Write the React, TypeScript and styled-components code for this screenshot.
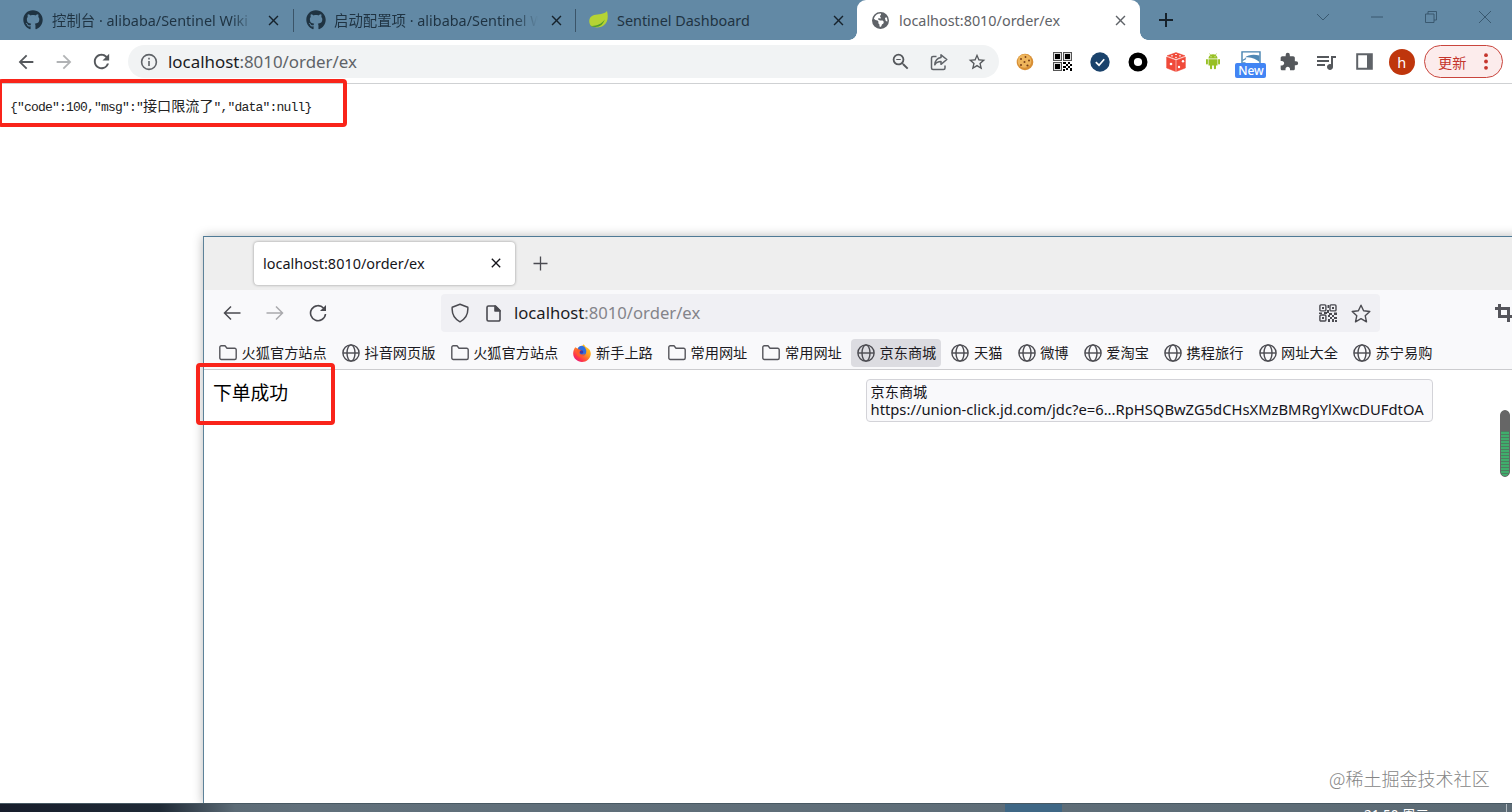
import React from "react";
import styled, { createGlobalStyle } from "styled-components";
import { FaGithub, FaEarthAmericas } from "react-icons/fa6";
import { MdExtension, MdQueueMusic, MdArrowBack, MdArrowForward, MdRefresh, MdOutlineZoomOut, MdStarBorder, MdAdd, MdClose } from "react-icons/md";

const latin = `"Noto Sans", "Noto Sans CJK SC", sans-serif`;

const GlobalStyle = createGlobalStyle`
  * { box-sizing: border-box; }
  body { margin: 0; background: #fff; overflow: hidden; font-family: ${latin}; }
  svg { display: block; flex: none; }
`;

const Desktop = styled.div`
  position: relative;
  width: 1512px;
  height: 812px;
  overflow: hidden;
  display: flex;
  flex-direction: column;
  background: #fff;
`;

/* ---------- back browser ---------- */

const TabStrip = styled.div`
  height: 40px;
  flex: none;
  display: flex;
  background: #6289a5;
`;

const StripTab = styled.div<{ $width: number; $divider?: boolean; $end?: number }>`
  width: ${(p) => p.$width}px;
  height: 40px;
  display: flex;
  align-items: center;
  padding: 0 ${(p) => p.$end ?? 12}px 0 12px;
  color: #1f3342;
  position: relative;
  &::after {
    content: "";
    display: ${(p) => (p.$divider ? "block" : "none")};
    position: absolute;
    right: 0;
    top: 9px;
    width: 1px;
    height: 23px;
    background: #3b5468;
  }
`;

const ActiveTab = styled(StripTab)`
  background: #fff;
  border-radius: 9px 9px 0 0;
  padding: 0 11px 0 15px;
  color: #5f6368;
  &::before,
  &::after {
    content: "";
    display: block;
    position: absolute;
    top: auto;
    bottom: 0;
    width: 8px;
    height: 8px;
  }
  &::before {
    left: -8px;
    background: radial-gradient(circle at 0 0, transparent 7.5px, #fff 8px);
  }
  &::after {
    right: -8px;
    background: radial-gradient(circle at 100% 0, transparent 7.5px, #fff 8px);
  }
`;

const TabTitle = styled.div<{ $fade?: boolean; $gap?: number }>`
  flex: 1;
  margin-left: ${(p) => p.$gap ?? 9}px;
  margin-right: 8px;
  font-size: 14.4px;
  line-height: 41px;
  height: 40px;
  white-space: nowrap;
  overflow: hidden;
  ${(p) => p.$fade && "mask-image: linear-gradient(90deg, #000 calc(100% - 26px), transparent calc(100% - 2px));"}
`;

const NewTab = styled.div`
  width: 52px;
  display: flex;
  align-items: center;
  justify-content: center;
  color: #16222c;
`;

const WindowButtons = styled.div`
  margin-left: auto;
  display: flex;
  height: 34px;
  align-items: center;
  color: #36536a;
`;

const WindowButton = styled.div`
  width: 54px;
  display: flex;
  justify-content: center;
`;

const Toolbar = styled.div`
  height: 44px;
  flex: none;
  display: flex;
  align-items: center;
  border-bottom: 1px solid #cfd1d3;
  background: #fff;
  color: #55585c;
`;

const NavButtons = styled.div`
  width: 128px;
  padding-left: 7px;
  display: flex;
`;

const NavButton = styled.div<{ $dim?: boolean; $width?: number }>`
  width: ${(p) => p.$width ?? 38}px;
  display: flex;
  justify-content: center;
  align-items: center;
  opacity: ${(p) => (p.$dim ? 0.45 : 1)};
`;

const Omnibox = styled.div`
  width: 871px;
  height: 33px;
  border-radius: 17px;
  background: #f1f3f4;
  display: flex;
  align-items: center;
  padding: 0 3px 0 12px;
`;

const Url = styled.div<{ $size: number; $gap: number; $tone: string }>`
  flex: 1;
  margin-left: ${(p) => p.$gap}px;
  font-size: ${(p) => p.$size}px;
  line-height: 32px;
  white-space: nowrap;
  color: ${(p) => p.$tone};
`;

const Host = styled.span`
  color: #1b1c1f;
`;

const Slot = styled.div<{ $width?: number }>`
  width: ${(p) => p.$width ?? 37.7}px;
  display: flex;
  justify-content: center;
  align-items: center;
`;

const Extensions = styled.div`
  display: flex;
  align-items: center;
  margin-left: 7px;
  width: 418px;
`;

const NewBadgeStack = styled.div`
  display: flex;
  flex-direction: column;
  align-items: center;
  height: 28px;
  margin-top: 6px;
`;

const NewBadge = styled.div`
  width: 31px;
  height: 15px;
  border-radius: 2px;
  background: #4285f4;
  color: #fff;
  font-size: 12px;
  font-weight: 500;
  line-height: 15px;
  text-align: center;
`;

const Avatar = styled.div`
  width: 26px;
  height: 26px;
  border-radius: 50%;
  background: #bf360c;
  color: #fff;
  font-size: 14.5px;
  line-height: 26px;
  text-align: center;
`;

const UpdatePill = styled.div`
  width: 79px;
  height: 33px;
  border: 1.5px solid #c9453d;
  border-radius: 17px;
  background: #fcecec;
  color: #c5352c;
  display: flex;
  align-items: center;
  padding: 0 14px 0 13px;
  justify-content: space-between;
  font-size: 14.2px;
`;

const Page = styled.div`
  flex: 1;
  padding: 12px 0 0 10px;
`;

const JsonLine = styled.div`
  display: flex;
  align-items: baseline;
  height: 18px;
  font-family: "Liberation Mono", "Noto Sans CJK SC", monospace;
  font-size: 13px;
  letter-spacing: -0.8px;
  line-height: 19px;
  color: #222;
  white-space: pre;
`;

const JsonText = styled.span`
  font-family: "Noto Sans CJK SC", sans-serif;
  font-size: 14.1px;
  letter-spacing: 0;
`;

/* ---------- front browser ---------- */

const FrontWindow = styled.div`
  position: absolute;
  left: 203px;
  top: 236px;
  width: 1320px;
  height: 568px;
  border-left: 1px solid #5d8299;
  border-top: 1px solid #4f7a96;
  background: #fff;
  box-shadow: 0 0 10px rgba(0, 0, 0, 0.28);
  display: flex;
  flex-direction: column;
`;

const FrontTabs = styled.div`
  height: 53px;
  flex: none;
  display: flex;
  align-items: center;
  padding: 0 0 1px 50px;
  background: #eeeeee;
`;

const FrontTab = styled.div`
  width: 261px;
  height: 43px;
  border-radius: 4px;
  background: #fff;
  box-shadow: 0 0 3px rgba(0, 0, 0, 0.38);
  display: flex;
  align-items: center;
  justify-content: space-between;
  padding: 0 11px 0 9px;
  font-size: 14.45px;
  color: #15141a;
`;

const FrontNav = styled.div`
  height: 46px;
  flex: none;
  display: flex;
  align-items: center;
  padding-left: 6px;
  background: #f9f9fb;
  color: #4a4a50;
`;

const FrontNavButtons = styled.div`
  display: flex;
  align-items: center;
  width: 231px;
`;

const FrontUrlBar = styled.div`
  width: 939px;
  height: 38px;
  border-radius: 4px;
  background: #f0f0f4;
  display: flex;
  align-items: center;
  padding: 0 0 0 10px;
`;

const CropSlot = styled.div`
  margin-left: 115px;
`;

const Bookmarks = styled.div`
  height: 34px;
  flex: none;
  display: flex;
  padding: 3px 0 2px 9px;
  background: #f9f9fb;
  border-bottom: 1px solid #cccccf;
  gap: 4.75px;
`;

const Bookmark = styled.div<{ $hover?: boolean }>`
  height: 28px;
  flex: none;
  display: flex;
  align-items: center;
  gap: 4.6px;
  padding: 0 4.4px 0 6px;
  border-radius: 4px;
  background: ${(p) => (p.$hover ? "#dcdce1" : "transparent")};
  font-size: 14.2px;
  line-height: 20px;
  color: #1c1b22;
  white-space: nowrap;
`;

const FrontPage = styled.div`
  flex: 1;
  padding: 8px 0 0 9px;
  font-size: 18.8px;
  line-height: 30px;
  color: #000;
`;

const Tooltip = styled.div`
  position: absolute;
  left: 866px;
  top: 379px;
  width: 567px;
  height: 43px;
  padding: 3px 0 0 3.5px;
  border: 1px solid #d3d3d8;
  border-radius: 4px;
  background: #f9f9fb;
  color: #15141a;
  white-space: nowrap;
`;

const TooltipLine = styled.div<{ $size: number; $height: number }>`
  height: ${(p) => p.$height}px;
  line-height: ${(p) => p.$height}px;
  font-size: ${(p) => p.$size}px;
`;

const Highlight = styled.div<{ $x: number; $y: number; $w: number; $h: number }>`
  position: absolute;
  left: ${(p) => p.$x}px;
  top: ${(p) => p.$y}px;
  width: ${(p) => p.$w}px;
  height: ${(p) => p.$h}px;
  border: 4px solid #f9241a;
  border-radius: 4px;
`;

const Meter = styled.div`
  position: absolute;
  left: 1500px;
  top: 410px;
  width: 10px;
  height: 67px;
  border-radius: 5px;
  border: 1px solid #666;
  background: linear-gradient(#666 20px, transparent 20px),
    repeating-linear-gradient(#3fae6c 0 2px, #4d7d60 2px 3px);
`;

const Watermark = styled.div`
  position: absolute;
  left: 1329px;
  top: 765px;
  font-size: 18.05px;
  line-height: 26px;
  font-family: "Noto Sans CJK SC", sans-serif;
  font-weight: 300;
  color: #858585;
  white-space: nowrap;
`;

const Taskbar = styled.div`
  position: absolute;
  left: 0;
  top: 803px;
  width: 1512px;
  height: 9px;
  border-top: 1px solid #485963;
  background: linear-gradient(90deg, #171d2b 0, #1f2a36 160px, #5c6b76 235px, #61707b 300px, #5c6b75 100%);
  display: flex;
  overflow: hidden;
`;

const TaskbarItem = styled.div`
  margin-left: 1005px;
  width: 57px;
  background: #3f6785;
`;

const Clock = styled.div`
  margin-left: 302px;
  width: 143px;
  padding-top: 3px;
  flex: none;
  font-size: 13.5px;
  line-height: 17px;
  color: #fff;
  border-right: 1px solid #b4bcc2;
`;

/* ---------- drawings ---------- */

const Leaf = () => (
  <svg width="21" height="20" viewBox="0 0 21 20">
    <path d="M19 1c1.6 6 .8 11.500-3.500 14.500-4 2.800-9 2.200-12.500.5C-.3 11.500 1.200 6.400 6 5c4.500-1.200 10-.3 13-4z" fill="#b5d334" />
    <path d="M2 15.800c6 .6 11.500-1.500 14.800-6.300-2 6-7 9.500-14.800 6.300z" fill="#4f9a2e" />
  </svg>
);

const Info = () => (
  <svg width="18" height="18" viewBox="0 0 18 18" fill="none" stroke="#5f6368" strokeWidth="1.6">
    <circle cx="9" cy="9" r="7.400" />
    <path d="M9 8v5M9 4.800v1.800" />
  </svg>
);

const Share = () => (
  <svg width="18" height="18" viewBox="0 0 18 18" fill="none" stroke="#5f6368" strokeWidth="1.500" strokeLinejoin="round">
    <path d="M6.500 3.500H3A1.500 1.500 0 0 0 1.500 5v10A1.500 1.500 0 0 0 3 16.500h10.500A1.500 1.500 0 0 0 15 15v-2.500" />
    <path d="M11 1.800 16.800 6.500 11 11.300V8.600c-3 0-4.900 1-6.200 3.200C5.100 7.700 7.200 5 11 4.500z" />
  </svg>
);

const Cookie = () => (
  <svg width="18" height="18" viewBox="0 0 18 18">
    <circle cx="9" cy="9" r="8.300" fill="#d88f35" />
    <circle cx="8.500" cy="8" r="6.800" fill="#eeb55c" />
    <g fill="#7a3f17">
      <circle cx="5" cy="6" r="1" /><circle cx="9.500" cy="4" r=".9" /><circle cx="13" cy="7.500" r="1" />
      <circle cx="8.500" cy="9" r="1" /><circle cx="5" cy="12" r="1" /><circle cx="11.500" cy="12.500" r="1.100" />
    </g>
  </svg>
);

const QrSolid = () => (
  <svg width="19" height="19" viewBox="0 0 19 19">
    <g fill="#ddd" stroke="#555" strokeWidth="1">
      <rect x=".5" y=".5" width="8" height="8" /><rect x="10.500" y=".5" width="8" height="8" /><rect x=".5" y="10.500" width="8" height="8" />
    </g>
    <g fill="#000">
      <rect x="2" y="2" width="5" height="5" /><rect x="12" y="2" width="5" height="5" /><rect x="2" y="12" width="5" height="5" />
      <path d="M10 10h3v2h-3zM15 10h2v2h-2zM13 12h2v2h-2zM17 12h2v2h-2zM10 14h3v2h-3zM15 14h2v2h-2zM13 16h2v2h-2zM17 16h2v3h-2zM10 17h2v2h-2z" />
    </g>
  </svg>
);

const CheckDisc = () => (
  <svg width="20" height="20" viewBox="0 0 20 20">
    <circle cx="10" cy="10" r="9.700" fill="#1a426b" />
    <path d="M5.800 10.200 9 13.200l5.200-6" fill="none" stroke="#fff" strokeWidth="1.700" />
  </svg>
);

const Ring = () => (
  <svg width="20" height="20" viewBox="0 0 20 20">
    <circle cx="10" cy="10" r="6.800" fill="none" stroke="#000" strokeWidth="5.400" />
  </svg>
);

const Dice = () => (
  <svg width="20" height="20" viewBox="0 0 20 20">
    <path d="M10 .6 19 3.800 10 7 1 3.800zM.6 5 9.500 8.200v11.200L.6 16zM19.400 5l-8.900 3.200v11.200l8.900-3.400z" fill="#f04a3a" stroke="#f04a3a" strokeWidth=".5" strokeLinejoin="round" />
    <g fill="#fff">
      <ellipse cx="6" cy="3.800" rx="1.200" ry=".6" /><ellipse cx="10" cy="2.400" rx="1.100" ry=".5" /><ellipse cx="14" cy="3.800" rx="1.200" ry=".6" /><ellipse cx="10" cy="5.200" rx="1.100" ry=".5" />
      <circle cx="5" cy="12" r="1.300" /><circle cx="13" cy="15" r="1.200" /><circle cx="17" cy="9.300" r="1.200" />
    </g>
  </svg>
);

const Android = () => (
  <svg width="14" height="17" viewBox="0 0 14 17" fill="#97c024">
    <path d="M2.500 5.500a4.500 4.200 0 0 1 9 0zM2.500 6.300h9v6.200h-9z" />
    <rect x="0" y="6" width="1.900" height="5.500" rx=".9" /><rect x="12.100" y="6" width="1.900" height="5.500" rx=".9" />
    <rect x="4" y="11" width="2.100" height="5.200" rx="1" /><rect x="7.900" y="11" width="2.100" height="5.200" rx="1" />
    <path d="m3.500.5 1.500 2M10.500.5 9 2.500" stroke="#97c024" strokeWidth=".7" />
    <circle cx="5" cy="3.700" r=".5" fill="#fff" /><circle cx="9" cy="3.700" r=".5" fill="#fff" />
  </svg>
);

const Snapshot = () => (
  <svg width="20" height="12" viewBox="0 0 20 12">
    <path d="M1 12V.9h18V12" fill="#fff" stroke="#4682b0" strokeWidth="1.400" />
    <path d="M4 6.500C7 3.500 13 3 18.500 4.500V11C15 8 10 5.500 4 6.500z" fill="#4f88b5" />
    <path d="M1.500 9.500 5 7.500M1.500 12h3" stroke="#4f88b5" strokeWidth="1.300" />
  </svg>
);

const SidePanel = () => (
  <svg width="17" height="17" viewBox="0 0 17 17">
    <path d="M1.200 1.200h14.600v14.600H1.200z" fill="none" stroke="#5f6368" strokeWidth="2" />
    <path d="M11 1h5v15h-5z" fill="#5f6368" />
  </svg>
);

const Dots = () => (
  <svg width="4" height="17" viewBox="0 0 4 17" fill="#c5352c">
    <circle cx="2" cy="2.200" r="1.900" /><circle cx="2" cy="8.500" r="1.900" /><circle cx="2" cy="14.800" r="1.900" />
  </svg>
);

const ThinArrow = ({ back }: { back?: boolean }) => (
  <svg width="18" height="16" viewBox="0 0 18 16" fill="none" stroke="currentColor" strokeWidth="1.500">
    <path d={back ? "M17.500 8H1.500M8 1.500 1.500 8 8 14.500" : "M.5 8h16M10 1.500 16.500 8 10 14.500"} />
  </svg>
);

const ThinReload = () => (
  <svg width="18" height="18" viewBox="0 0 18 18" fill="none" stroke="currentColor" strokeWidth="1.600">
    <path d="M16.500 10A7.500 7.500 0 1 1 14.500 4" />
    <path d="M17 1v6h-6z" fill="currentColor" stroke="none" />
  </svg>
);

const Shield = () => (
  <svg width="18" height="20" viewBox="0 0 18 20" fill="none" stroke="currentColor" strokeWidth="1.500" strokeLinejoin="round">
    <path d="M9 1.200 16.800 4.300c.5 6-2 11.500-7.800 14.500C3.200 15.800.7 10.300 1.200 4.300z" />
  </svg>
);

const Doc = () => (
  <svg width="15" height="17" viewBox="0 0 15 17" fill="none" stroke="currentColor" strokeWidth="1.600" strokeLinejoin="round">
    <path d="M9.500 1H2.500A1.500 1.500 0 0 0 1 2.500v12A1.500 1.500 0 0 0 2.500 16h10a1.500 1.500 0 0 0 1.500-1.500V5.500z" />
    <path d="M9 1v5h5z" fill="currentColor" />
  </svg>
);

const QrOutline = () => (
  <svg width="18" height="18" viewBox="0 0 18 18">
    <g fill="none" stroke="#4a4a50" strokeWidth="1.400">
      <rect x=".9" y=".9" width="6" height="6" rx="1" /><rect x="11" y=".9" width="6" height="6" rx="1" /><rect x=".9" y="11" width="6" height="6" rx="1" />
    </g>
    <path d="M3 3h2v2H3zM13 3h2v2h-2zM3 13h2v2H3zM8.500 1H10v3H8.500zM8 6h2v3H8zM0 8.500h3V10H0zM5 8h3v2H5zM10 9h3v2h-3zM15 8.500h3V11h-3zM9 11h2v2H9zM13 11h2v2h-2zM11 13h2v2h-2zM15 13h3v2h-3zM9 15h2v3H9zM13 15h2v3h-2zM16 16h2v2h-2z" fill="#4a4a50" />
  </svg>
);

const ThinStar = () => (
  <svg width="20" height="19" viewBox="0 0 20 19" fill="none" stroke="currentColor" strokeWidth="1.400" strokeLinejoin="round">
    <path d="m10 1.200 2.600 5.600 6.200.7-4.600 4.200 1.300 6.100L10 14.700l-5.500 3.100 1.300-6.100L1.200 7.500l6.200-.7z" />
  </svg>
);

const Crop = () => (
  <svg width="18" height="18" viewBox="0 0 18 18" fill="none" stroke="#55555b" strokeWidth="3">
    <path d="M4.500 0v12.500H18M0 4.500h13.500V18" />
  </svg>
);

const Folder = () => (
  <svg width="18" height="16" viewBox="0 0 18 16" fill="none" stroke="#55555b" strokeWidth="1.400" strokeLinejoin="round">
    <path d="M.8 13V2.300A1.500 1.500 0 0 1 2.300.8H6l2 2.400h7.700a1.500 1.500 0 0 1 1.500 1.500V13a1.500 1.500 0 0 1-1.500 1.500H2.300A1.500 1.500 0 0 1 .8 13z" />
  </svg>
);

const Globe = () => (
  <svg width="18" height="18" viewBox="0 0 18 18" fill="none" stroke="#4a4a50" strokeWidth="1.400">
    <circle cx="9" cy="9" r="8.100" />
    <ellipse cx="9" cy="9" rx="4" ry="8.100" />
    <path d="M1 9h16" />
  </svg>
);

const Fox = () => (
  <svg width="18" height="18" viewBox="0 0 18 18">
    <defs>
      <linearGradient id="fox" x1="1" y1="0" x2=".2" y2="1">
        <stop offset="0" stopColor="#ffe226" /><stop offset=".45" stopColor="#ff9a1f" /><stop offset=".8" stopColor="#ff3647" /><stop offset="1" stopColor="#e31587" />
      </linearGradient>
    </defs>
    <path d="M2.200 3.200 4.500 4.500C6 2.500 9 3 10.500.2c1.200 1 1.800 1.900 2.200 2.700C16 4 18 7 17.800 10 17.400 14.700 13.600 18 9 18S.3 14.500.2 9.800C.1 7.200 1 5 2.200 3.200z" fill="url(#fox)" />
    <path d="M5 4C7 1 11 1 12.500 4.500c1.800 3 .5 7-3 7.500C6 12.300 4 9.500 5.500 7z" fill="#2f6fe0" />
    <path d="M3.500 5.500c2.500-1 4 .3 5.500 1.200-1.500 1.300-2.500 1.100-2.500 2.600 1.500 2 4 1 5.500.2-1 3.500-6 4.500-8 1.500z" fill="#ff5a2c" />
    <circle cx="8.500" cy="8" r="1.800" fill="#4338a8" />
  </svg>
);

const bookmarks: { label: string; icon: React.ReactNode; hover?: boolean }[] = [
  { label: "火狐官方站点", icon: <Folder /> },
  { label: "抖音网页版", icon: <Globe /> },
  { label: "火狐官方站点", icon: <Folder /> },
  { label: "新手上路", icon: <Fox /> },
  { label: "常用网址", icon: <Folder /> },
  { label: "常用网址", icon: <Folder /> },
  { label: "京东商城", icon: <Globe />, hover: true },
  { label: "天猫", icon: <Globe /> },
  { label: "微博", icon: <Globe /> },
  { label: "爱淘宝", icon: <Globe /> },
  { label: "携程旅行", icon: <Globe /> },
  { label: "网址大全", icon: <Globe /> },
  { label: "苏宁易购", icon: <Globe /> },
];

const controls = ["M1 4l6 6 6-6", "M1 7h12", "M1.500 4h8.500v8.500H1.500zM4 4V1.500h8.500V10H10", "M1 1l12 12M13 1 1 13"];

export default function App() {
  return (
    <Desktop>
      <GlobalStyle />
      <TabStrip>
        <StripTab $width={294} $divider>
          <Slot $width={41}><FaGithub size={20} /></Slot>
          <TabTitle $fade $gap={-1}>控制台 · alibaba/Sentinel Wiki</TabTitle>
          <MdClose size={17} color="#16222c" />
        </StripTab>
        <StripTab $width={282} $divider $end={11}>
          <FaGithub size={20} />
          <TabTitle $fade $gap={8}>启动配置项 · alibaba/Sentinel Wiki</TabTitle>
          <MdClose size={17} color="#16222c" />
        </StripTab>
        <StripTab $width={281} $end={10}>
          <Leaf />
          <TabTitle $gap={8}>Sentinel Dashboard</TabTitle>
          <MdClose size={17} color="#16222c" />
        </StripTab>
        <ActiveTab $width={283}>
          <FaEarthAmericas size={17} />
          <TabTitle $gap={10}>localhost:8010/order/ex</TabTitle>
          <MdClose size={17} />
        </ActiveTab>
        <NewTab><MdAdd size={24} /></NewTab>
        <WindowButtons>
          {controls.map((d) => (
            <WindowButton key={d}>
              <svg width="14" height="14" viewBox="0 0 14 14" fill="none" stroke="currentColor" strokeWidth=".9"><path d={d} /></svg>
            </WindowButton>
          ))}
        </WindowButtons>
      </TabStrip>
      <Toolbar>
        <NavButtons>
          <NavButton $width={37}><MdArrowBack size={22} /></NavButton>
          <NavButton $dim $width={39}><MdArrowForward size={22} /></NavButton>
          <NavButton $width={37}><MdRefresh size={23} /></NavButton>
        </NavButtons>
        <Omnibox>
          <Info />
          <Url $size={16.9} $gap={10} $tone="#5f6368"><Host>localhost</Host>:8010/order/ex</Url>
          <Slot $width={38}><MdOutlineZoomOut size={21.5} /></Slot>
          <Slot $width={38}><Share /></Slot>
          <Slot $width={38}><MdStarBorder size={20} /></Slot>
        </Omnibox>
        <Extensions>
          <Slot><Cookie /></Slot>
          <Slot><QrSolid /></Slot>
          <Slot><CheckDisc /></Slot>
          <Slot><Ring /></Slot>
          <Slot><Dice /></Slot>
          <Slot><Android /></Slot>
          <Slot><NewBadgeStack><Snapshot /><NewBadge>New</NewBadge></NewBadgeStack></Slot>
          <Slot><MdExtension size={20} /></Slot>
          <Slot><MdQueueMusic size={24} /></Slot>
          <Slot><SidePanel /></Slot>
          <Slot><Avatar>h</Avatar></Slot>
        </Extensions>
        <UpdatePill>更新<Dots /></UpdatePill>
      </Toolbar>
      <Page>
        <JsonLine>{'{"code":100,"msg":"'}<JsonText>接口限流了</JsonText>{'","data":null}'}</JsonLine>
      </Page>

      <FrontWindow>
        <FrontTabs>
          <FrontTab>localhost:8010/order/ex<MdClose size={16} /></FrontTab>
          <Slot $width={50}>
            <svg width="15" height="15" viewBox="0 0 15 15" stroke="#4a4a50" strokeWidth="1.300"><path d="M7.500.5v14M.5 7.500h14" /></svg>
          </Slot>
        </FrontTabs>
        <FrontNav>
          <FrontNavButtons>
            <NavButton $width={44}><ThinArrow back /></NavButton>
            <NavButton $width={42} $dim><ThinArrow /></NavButton>
            <NavButton $width={43}><ThinReload /></NavButton>
          </FrontNavButtons>
          <FrontUrlBar>
            <Shield />
            <Slot $width={48}><Doc /></Slot>
            <Url $size={16.65} $gap={-3} $tone="#84848a"><Host>localhost</Host>:8010/order/ex</Url>
            <Slot $width={29}><QrOutline /></Slot>
            <Slot $width={38}><ThinStar /></Slot>
          </FrontUrlBar>
          <CropSlot><Crop /></CropSlot>
        </FrontNav>
        <Bookmarks>
          {bookmarks.map((b, i) => (
            <Bookmark key={i} $hover={b.hover}>{b.icon}{b.label}</Bookmark>
          ))}
        </Bookmarks>
        <FrontPage>下单成功</FrontPage>
      </FrontWindow>

      <Tooltip>
        <TooltipLine $size={14.2} $height={18}>京东商城</TooltipLine>
        <TooltipLine $size={14.78} $height={16}>https://union-click.jd.com/jdc?e=6...RpHSQBwZG5dCHsXMzBMRgYlXwcDUFdtOA</TooltipLine>
      </Tooltip>
      <Meter />
      <Watermark>@稀土掘金技术社区</Watermark>
      <Taskbar>
        <TaskbarItem />
        <Clock>21:50 周二</Clock>
      </Taskbar>
      <Highlight $x={-2} $y={79} $w={349} $h={48} />
      <Highlight $x={196} $y={363} $w={139} $h={62} />
    </Desktop>
  );
}
